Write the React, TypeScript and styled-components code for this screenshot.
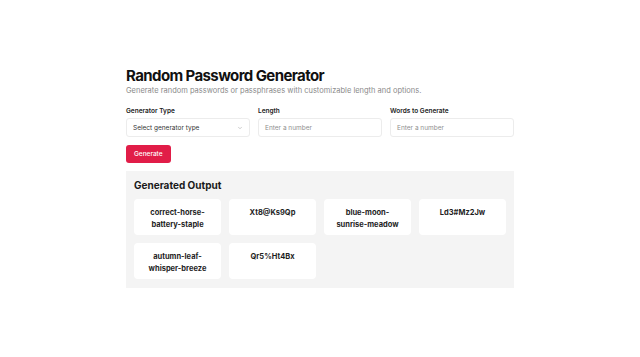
import React from 'react'
import styled, { createGlobalStyle } from 'styled-components'

const GlobalStyle = createGlobalStyle`
  html, body { margin: 0; padding: 0; background: #ffffff; }
  body { font-family: Inter, "Noto Sans", sans-serif; color: #111111; }
  * { box-sizing: border-box; }
`

const Page = styled.div`
  min-height: 100vh;
  display: flex;
  justify-content: center;
  padding-top: 66px;
`

const Container = styled.div`
  width: 388px;
  display: flex;
  flex-direction: column;
`

const Title = styled.h1`
  margin: 0;
  font-size: 15px;
  line-height: 20px;
  font-weight: 700;
  letter-spacing: -0.6px;
  color: #111111;
`

const Subtitle = styled.p`
  margin: 0;
  font-size: 7.5px;
  line-height: 10px;
  color: #8a8a8a;
`

const Fields = styled.div`
  display: grid;
  grid-template-columns: repeat(3, 1fr);
  gap: 8px;
  margin-top: 10px;
`

const Field = styled.div`
  display: flex;
  flex-direction: column;
  gap: 2px;
`

const Label = styled.label`
  font-size: 6.5px;
  line-height: 10px;
  font-weight: 600;
  color: #222222;
`

const Control = styled.div<{ placeholder?: boolean }>`
  height: 19px;
  display: flex;
  align-items: center;
  justify-content: space-between;
  padding: 0 6px;
  border: 1px solid #ececec;
  border-radius: 3px;
  font-size: 6.5px;
  color: ${({ placeholder }) => (placeholder ? '#8f8f8f' : '#333333')};
`

const Chevron = styled.svg`
  width: 6px;
  height: 6px;
  color: #9a9a9a;
`

const Button = styled.button`
  align-self: flex-start;
  margin-top: 8px;
  height: 18px;
  padding: 0 8px;
  border: none;
  border-radius: 3px;
  background: #e11d48;
  color: #ffffff;
  font-family: inherit;
  font-size: 6.5px;
  font-weight: 500;
`

const Panel = styled.section`
  margin-top: 8px;
  background: #f4f4f4;
  padding: 8px 8px 9px;
`

const PanelTitle = styled.h2`
  margin: 0 0 7px;
  font-size: 10px;
  line-height: 13px;
  font-weight: 700;
  color: #1a1a1a;
`

const Grid = styled.div`
  display: grid;
  grid-template-columns: repeat(4, 1fr);
  gap: 8px;
`

const Card = styled.div`
  background: #ffffff;
  border-radius: 4px;
  min-height: 36px;
  padding: 8px 8px 4px;
  text-align: center;
  font-size: 7.5px;
  line-height: 12px;
  font-weight: 700;
  color: #1e1e1e;
`

const outputs = [
  ['correct-horse-', 'battery-staple'],
  ['Xt8@Ks9Qp'],
  ['blue-moon-', 'sunrise-meadow'],
  ['Ld3#Mz2Jw'],
  ['autumn-leaf-', 'whisper-breeze'],
  ['Qr5%Ht4Bx'],
]

export default function App() {
  return (
    <>
      <GlobalStyle />
      <Page>
        <Container>
          <Title>Random Password Generator</Title>
          <Subtitle>Generate random passwords or passphrases with customizable length and options.</Subtitle>
          <Fields>
            <Field>
              <Label>Generator Type</Label>
              <Control>
                Select generator type
                <Chevron viewBox="0 0 24 24" fill="none" stroke="currentColor" strokeWidth="2" strokeLinecap="round" strokeLinejoin="round">
                  <path d="m6 9 6 6 6-6" />
                </Chevron>
              </Control>
            </Field>
            <Field>
              <Label>Length</Label>
              <Control placeholder>Enter a number</Control>
            </Field>
            <Field>
              <Label>Words to Generate</Label>
              <Control placeholder>Enter a number</Control>
            </Field>
          </Fields>
          <Button>Generate</Button>
          <Panel>
            <PanelTitle>Generated Output</PanelTitle>
            <Grid>
              {outputs.map((lines, i) => (
                <Card key={i}>
                  {lines.map((l, j) => (
                    <div key={j}>{l}</div>
                  ))}
                </Card>
              ))}
            </Grid>
          </Panel>
        </Container>
      </Page>
    </>
  )
}
